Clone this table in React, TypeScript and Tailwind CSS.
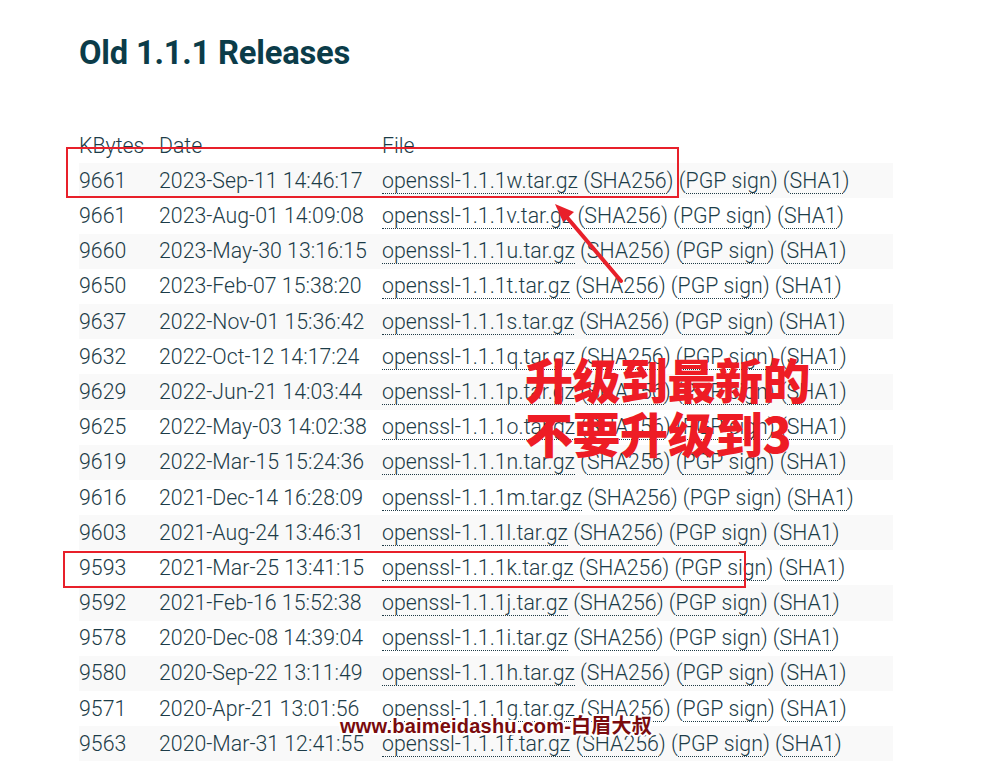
import React from 'react';

const releases: [string, string, string][] = [
  ['9661', '2023-Sep-11 14:46:17', 'w'],
  ['9661', '2023-Aug-01 14:09:08', 'v'],
  ['9660', '2023-May-30 13:16:15', 'u'],
  ['9650', '2023-Feb-07 15:38:20', 't'],
  ['9637', '2022-Nov-01 15:36:42', 's'],
  ['9632', '2022-Oct-12 14:17:24', 'q'],
  ['9629', '2022-Jun-21 14:03:44', 'p'],
  ['9625', '2022-May-03 14:02:38', 'o'],
  ['9619', '2022-Mar-15 15:24:36', 'n'],
  ['9616', '2021-Dec-14 16:28:09', 'm'],
  ['9603', '2021-Aug-24 13:46:31', 'l'],
  ['9593', '2021-Mar-25 13:41:15', 'k'],
  ['9592', '2021-Feb-16 15:52:38', 'j'],
  ['9578', '2020-Dec-08 14:39:04', 'i'],
  ['9580', '2020-Sep-22 13:11:49', 'h'],
  ['9571', '2020-Apr-21 13:01:56', 'g'],
  ['9563', '2020-Mar-31 12:41:55', 'f'],
];

const DotLink: React.FC<{ children: React.ReactNode }> = ({ children }) => (
  <a href="#" className="border-b border-dotted border-[#1f3b46] text-[#1c3c48] no-underline">
    {children}
  </a>
);

const App: React.FC = () => {
  return (
    <div
      className="relative w-[990px] h-[764px] overflow-hidden bg-white pl-[79px]"
      style={{ fontFamily: 'Roboto, "Noto Sans", sans-serif' }}
    >
      <h1 className="pt-[33px] text-[32.7px] leading-[40px] font-bold text-[#0b3c49] tracking-[-0.2px]">
        Old 1.1.1 Releases
      </h1>

      <table className="mt-[55px] w-[814px] table-fixed border-collapse text-[21.3px] font-light text-[#1c3c48]">
        <colgroup>
          <col className="w-[80px]" />
          <col className="w-[223px]" />
          <col />
        </colgroup>
        <thead>
          <tr className="h-[35.2px] text-left">
            <th className="p-0 font-light">KBytes</th>
            <th className="p-0 font-light">Date</th>
            <th className="p-0 font-light">File</th>
          </tr>
        </thead>
        <tbody>
          {releases.map(([kb, date, v], i) => (
            <tr key={v} className={i % 2 === 0 ? 'h-[35.2px] bg-[#f9f9f9]' : 'h-[35.2px]'}>
              <td className="p-0">{kb}</td>
              <td className="p-0 whitespace-nowrap">{date}</td>
              <td className="p-0 whitespace-nowrap">
                <DotLink>openssl-1.1.1{v}.tar.gz</DotLink> (<DotLink>SHA256</DotLink>) (
                <DotLink>PGP sign</DotLink>) (<DotLink>SHA1</DotLink>)
              </td>
            </tr>
          ))}
        </tbody>
      </table>

      {/* red annotations */}
      <svg className="absolute left-0 top-0 pointer-events-none" width="990" height="764">
        <rect x="67" y="148" width="611" height="49" fill="none" stroke="#e8202a" strokeWidth="2" />
        <rect x="64" y="552" width="681" height="35" fill="none" stroke="#e8202a" strokeWidth="2" />
        <line x1="621" y1="281" x2="565" y2="215" stroke="#e8202a" strokeWidth="4" strokeLinecap="round" />
        <polygon points="555,204 574,212 563,222" fill="#e8202a" />
      </svg>

      <div
        className="absolute left-[525px] top-[351px] text-[48px] leading-[54px] font-black text-[#ee1c25] tracking-[-0.5px]"
        style={{ fontFamily: '"Noto Sans CJK SC", sans-serif' }}
      >
        <div>升级到最新的</div>
        <div>不要升级到3</div>
      </div>

      <div
        className="absolute left-[340px] top-[712px] text-[20px] leading-[28px] font-bold text-[#7a0b0d] tracking-[0.2px]"
        style={{
          fontFamily: '"Liberation Sans", "Noto Sans CJK SC", sans-serif',
          WebkitTextStroke: '4px white',
          paintOrder: 'stroke fill',
        }}
      >
        www.baimeidashu.com-白眉大叔
      </div>
    </div>
  );
};

export default App;
